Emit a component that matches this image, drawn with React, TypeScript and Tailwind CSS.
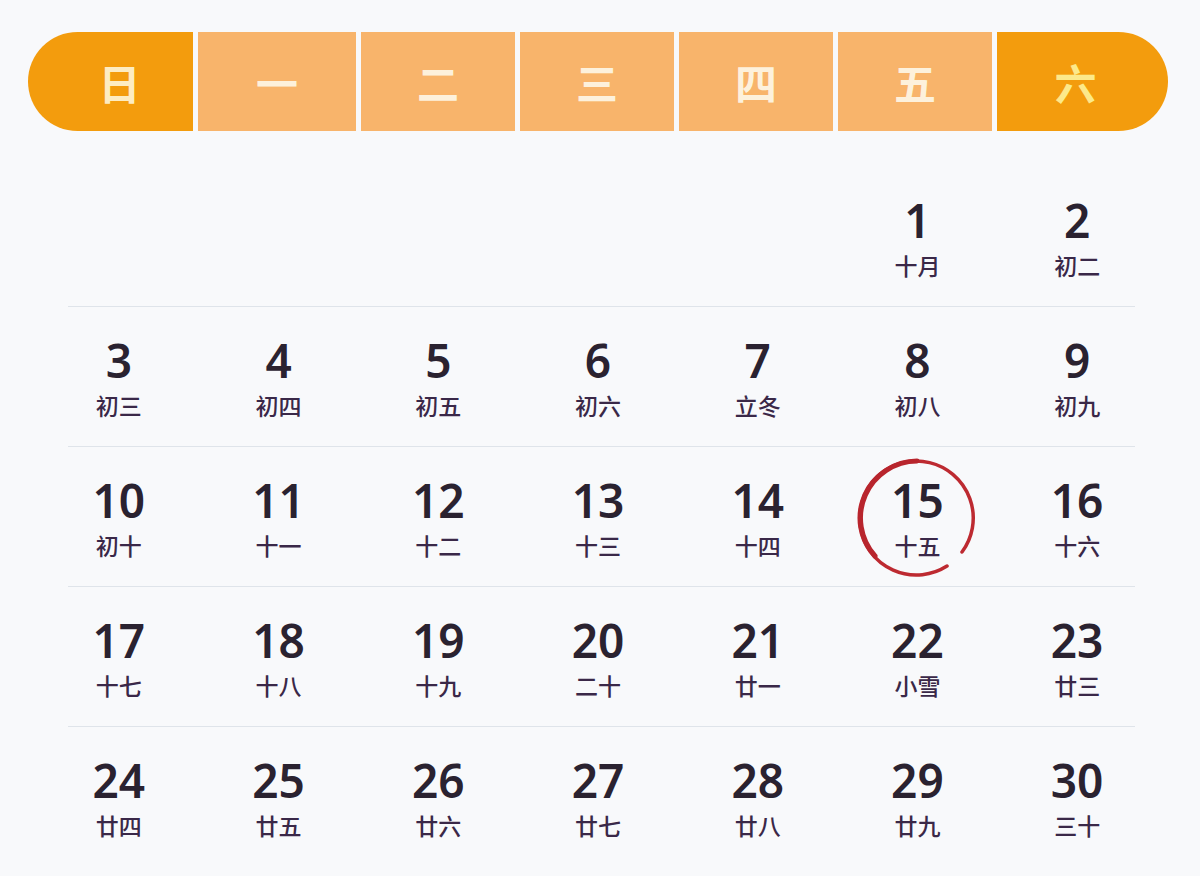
import React from 'react';

const weekdays = [
  { label: '日', cls: 'w-[165px] rounded-l-full bg-[#f39c0d] pl-[18px] text-[#fdecc2]' },
  { label: '一', cls: 'w-[158px] bg-[#f8b46b] text-[#fdf1dc]' },
  { label: '二', cls: 'w-[154px] bg-[#f8b46b] text-[#fdf1dc]' },
  { label: '三', cls: 'w-[154px] bg-[#f8b46b] text-[#fdf1dc]' },
  { label: '四', cls: 'w-[154px] bg-[#f8b46b] text-[#fdf1dc]' },
  { label: '五', cls: 'w-[154px] bg-[#f8b46b] text-[#fdf1dc]' },
  { label: '六', cls: 'w-[171px] rounded-r-full bg-[#f39c0d] pr-[14px] text-[#fce98a]' },
];

type Day = { n: number; lunar: string } | null;

const weeks: Day[][] = [
  [null, null, null, null, null, { n: 1, lunar: '十月' }, { n: 2, lunar: '初二' }],
  [
    { n: 3, lunar: '初三' },
    { n: 4, lunar: '初四' },
    { n: 5, lunar: '初五' },
    { n: 6, lunar: '初六' },
    { n: 7, lunar: '立冬' },
    { n: 8, lunar: '初八' },
    { n: 9, lunar: '初九' },
  ],
  [
    { n: 10, lunar: '初十' },
    { n: 11, lunar: '十一' },
    { n: 12, lunar: '十二' },
    { n: 13, lunar: '十三' },
    { n: 14, lunar: '十四' },
    { n: 15, lunar: '十五' },
    { n: 16, lunar: '十六' },
  ],
  [
    { n: 17, lunar: '十七' },
    { n: 18, lunar: '十八' },
    { n: 19, lunar: '十九' },
    { n: 20, lunar: '二十' },
    { n: 21, lunar: '廿一' },
    { n: 22, lunar: '小雪' },
    { n: 23, lunar: '廿三' },
  ],
  [
    { n: 24, lunar: '廿四' },
    { n: 25, lunar: '廿五' },
    { n: 26, lunar: '廿六' },
    { n: 27, lunar: '廿七' },
    { n: 28, lunar: '廿八' },
    { n: 29, lunar: '廿九' },
    { n: 30, lunar: '三十' },
  ],
];

// brush-like red ring around today, heavier on the left
const TodayRing: React.FC = () => (
  <svg
    className="absolute left-1/2 top-1/2 -translate-x-1/2 -translate-y-1/2"
    width="124"
    height="124"
    viewBox="0 0 124 124"
  >
    <path
      d="M 92 110 A 57 57 0 1 1 107 96"
      fill="none"
      stroke="#bd2a31"
      strokeWidth="3.5"
      strokeLinecap="round"
    />
    <path
      d="M 62 5 A 57 57 0 0 0 20 100"
      fill="none"
      stroke="#b8252d"
      strokeWidth="5"
      strokeLinecap="round"
    />
  </svg>
);

const App: React.FC = () => {
  return (
    <div className="min-h-screen w-[1200px] h-[876px] overflow-hidden bg-[#f8f9fb] font-['Noto_Sans','Noto_Sans_CJK_SC',sans-serif]">
      <div className="pt-[32px] pl-[28px]">
        <div className="flex w-[1142px] h-[99px] gap-[5px]">
          {weekdays.map((d) => (
            <div
              key={d.label}
              className={`flex items-center justify-center h-full text-[42px] font-bold font-['Noto_Sans_CJK_SC',sans-serif] ${d.cls}`}
            >
              {d.label}
            </div>
          ))}
        </div>
      </div>

      <div className="mt-[36px]">
        {weeks.map((week, wi) => (
          <div key={wi}>
            <div className="grid grid-cols-7 w-[1118px] ml-[39px] h-[139px] items-start pt-[29px]">
              {week.map((day, di) => (
                <div key={di} className="relative flex flex-col items-center">
                  {day && (
                    <>
                      {day.n === 15 && <TodayRing />}
                      <div className="text-[46px] leading-[48px] font-semibold text-[#2a2230] font-['Noto_Sans',sans-serif]">
                        {day.n}
                      </div>
                      <div className="mt-[7px] text-[23px] leading-[28px] font-medium text-[#3a2848] font-['Noto_Sans_CJK_SC',sans-serif]">
                        {day.lunar}
                      </div>
                    </>
                  )}
                </div>
              ))}
            </div>
            {wi < weeks.length - 1 && <div className="h-px w-[1067px] ml-[68px] bg-[#dfe4ea]" />}
          </div>
        ))}
      </div>
    </div>
  );
};

export default App;
